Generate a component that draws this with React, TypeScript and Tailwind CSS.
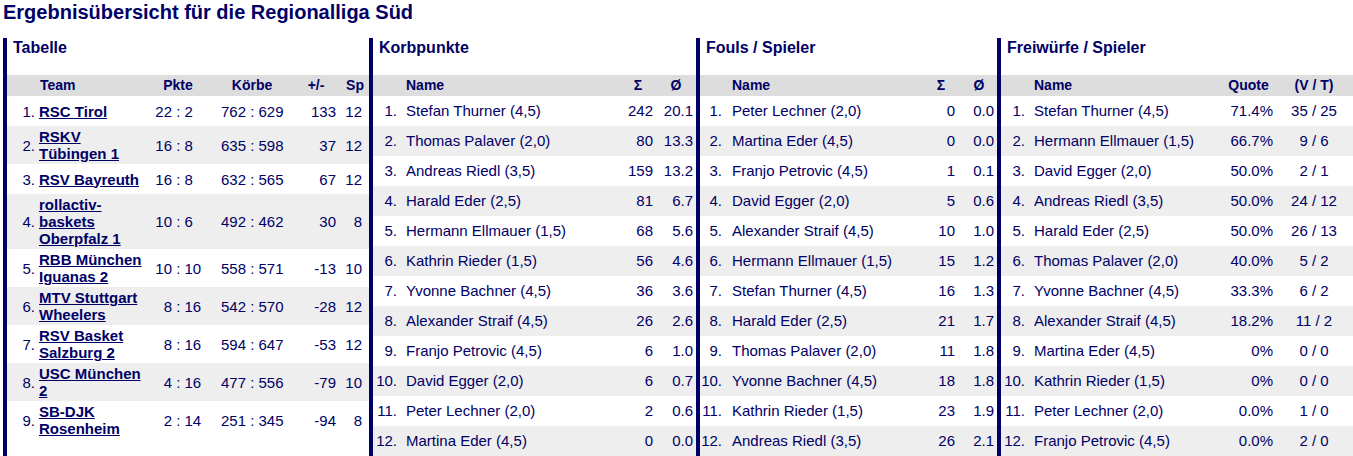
import React from 'react';

type TeamRow = [string, string, number, number, number, number, number, number];
type PlayerRow = [string, string, string];

const tabelle: TeamRow[] = [
  ['1.', 'RSC Tirol', 22, 2, 762, 629, 133, 12],
  ['2.', 'RSKV Tübingen 1', 16, 8, 635, 598, 37, 12],
  ['3.', 'RSV Bayreuth', 16, 8, 632, 565, 67, 12],
  ['4.', 'rollactiv-baskets Oberpfalz 1', 10, 6, 492, 462, 30, 8],
  ['5.', 'RBB München Iguanas 2', 10, 10, 558, 571, -13, 10],
  ['6.', 'MTV Stuttgart Wheelers', 8, 16, 542, 570, -28, 12],
  ['7.', 'RSV Basket Salzburg 2', 8, 16, 594, 647, -53, 12],
  ['8.', 'USC München 2', 4, 16, 477, 556, -79, 10],
  ['9.', 'SB-DJK Rosenheim', 2, 14, 251, 345, -94, 8],
];

const korbpunkte: PlayerRow[] = [
  ['Stefan Thurner (4,5)', '242', '20.1'],
  ['Thomas Palaver (2,0)', '80', '13.3'],
  ['Andreas Riedl (3,5)', '159', '13.2'],
  ['Harald Eder (2,5)', '81', '6.7'],
  ['Hermann Ellmauer (1,5)', '68', '5.6'],
  ['Kathrin Rieder (1,5)', '56', '4.6'],
  ['Yvonne Bachner (4,5)', '36', '3.6'],
  ['Alexander Straif (4,5)', '26', '2.6'],
  ['Franjo Petrovic (4,5)', '6', '1.0'],
  ['David Egger (2,0)', '6', '0.7'],
  ['Peter Lechner (2,0)', '2', '0.6'],
  ['Martina Eder (4,5)', '0', '0.0'],
];

const fouls: PlayerRow[] = [
  ['Peter Lechner (2,0)', '0', '0.0'],
  ['Martina Eder (4,5)', '0', '0.0'],
  ['Franjo Petrovic (4,5)', '1', '0.1'],
  ['David Egger (2,0)', '5', '0.6'],
  ['Alexander Straif (4,5)', '10', '1.0'],
  ['Hermann Ellmauer (1,5)', '15', '1.2'],
  ['Stefan Thurner (4,5)', '16', '1.3'],
  ['Harald Eder (2,5)', '21', '1.7'],
  ['Thomas Palaver (2,0)', '11', '1.8'],
  ['Yvonne Bachner (4,5)', '18', '1.8'],
  ['Kathrin Rieder (1,5)', '23', '1.9'],
  ['Andreas Riedl (3,5)', '26', '2.1'],
];

const freiwuerfe: PlayerRow[] = [
  ['Stefan Thurner (4,5)', '71.4%', '35 / 25'],
  ['Hermann Ellmauer (1,5)', '66.7%', '9 / 6'],
  ['David Egger (2,0)', '50.0%', '2 / 1'],
  ['Andreas Riedl (3,5)', '50.0%', '24 / 12'],
  ['Harald Eder (2,5)', '50.0%', '26 / 13'],
  ['Thomas Palaver (2,0)', '40.0%', '5 / 2'],
  ['Yvonne Bachner (4,5)', '33.3%', '6 / 2'],
  ['Alexander Straif (4,5)', '18.2%', '11 / 2'],
  ['Martina Eder (4,5)', '0%', '0 / 0'],
  ['Kathrin Rieder (1,5)', '0%', '0 / 0'],
  ['Peter Lechner (2,0)', '0.0%', '1 / 0'],
  ['Franjo Petrovic (4,5)', '0.0%', '2 / 0'],
];

const Panel = ({ title, className, children }: { title: string; className: string; children: React.ReactNode }) => (
  <div className={`flex flex-col border-l-4 border-[#000066] ${className}`}>
    <div className="h-[37px] pt-[1px] pl-[6px] text-[16px] font-bold leading-[18px]">{title}</div>
    {children}
  </div>
);

const rowBg = (i: number) => (i % 2 === 1 ? 'bg-[#eeeeee]' : 'bg-white');

// Spalten: Rang / Name / Wert / Wert
type Cols = {
  rank: string;
  name: string;
  a: string;
  aHead: string;
  b: string;
  bHead: string;
};

const PlayerTable = ({ rows, heads, cols }: { rows: PlayerRow[]; heads: [string, string]; cols: Cols }) => (
  <div>
    <div className="flex h-[21px] items-center bg-[#dddddd] text-[14px] font-bold">
      <div className={cols.rank} />
      <div className={cols.name}>Name</div>
      <div className={cols.aHead}>{heads[0]}</div>
      <div className={cols.bHead}>{heads[1]}</div>
    </div>
    {rows.map((r, i) => (
      <div key={i} className={`flex h-[30px] items-center ${rowBg(i)}`}>
        <div className={`${cols.rank} text-right`}>{i + 1}.</div>
        <div className={`${cols.name} whitespace-nowrap`}>{r[0]}</div>
        <div className={cols.a}>{r[1]}</div>
        <div className={cols.b}>{r[2]}</div>
      </div>
    ))}
  </div>
);

const Ratio = ({ l, r, lw, rw }: { l: number; r: number; lw: string; rw: string }) => (
  <div className="flex">
    <span className={`${lw} text-right`}>{l}</span>
    <span className="whitespace-pre"> : </span>
    <span className={rw}>{r}</span>
  </div>
);

const Tabelle = () => (
  <div>
    <div className="flex h-[21px] items-center bg-[#dddddd] text-[14px] font-bold">
      <div className="w-[28px] shrink-0" />
      <div className="w-[108px] shrink-0 pl-[5px]">Team</div>
      <div className="w-[70px] shrink-0 text-center">Pkte</div>
      <div className="w-[78px] shrink-0 text-center">Körbe</div>
      <div className="w-[50px] shrink-0 text-center">+/-</div>
      <div className="w-[28px] shrink-0 text-center">Sp</div>
    </div>
    {tabelle.map((t, i) => (
      <div key={i} className={`flex min-h-[30px] items-center py-[2px] leading-[17px] ${rowBg(i)}`}>
        <div className="w-[28px] shrink-0 text-right">{t[0]}</div>
        <div className="w-[108px] shrink-0 pl-[4px]">
          <a href="#" className="font-bold underline">
            {t[1]}
          </a>
        </div>
        <div className="w-[70px] shrink-0">
          <Ratio l={t[2]} r={t[3]} lw="w-[29px]" rw="w-[28px]" />
        </div>
        <div className="w-[78px] shrink-0">
          <Ratio l={t[4]} r={t[5]} lw="w-[33px]" rw="w-[32px]" />
        </div>
        <div className="w-[50px] shrink-0 pr-[5px] text-right">{t[6]}</div>
        <div className="w-[28px] shrink-0 pr-[7px] text-right">{t[7]}</div>
      </div>
    ))}
  </div>
);

const App = () => {
  return (
    <div className="min-h-[456px] bg-white pl-[3px] font-['Liberation_Sans',Arial,sans-serif] text-[15px] text-[#000066]">
      <h1 className="h-[38px] pt-[1px] text-[20px] font-bold leading-[23px]">
        Ergebnisübersicht für die Regionalliga Süd
      </h1>
      <div className="flex items-stretch">
        <Panel title="Tabelle" className="w-[366px] shrink-0">
          <Tabelle />
        </Panel>
        <Panel title="Korbpunkte" className="w-[327px] shrink-0">
          <PlayerTable
            rows={korbpunkte}
            heads={['Σ', 'Ø']}
            cols={{
              rank: 'w-[24px] shrink-0',
              name: 'flex-1 pl-[9px]',
              a: 'w-[36px] shrink-0 pr-[3px] text-right',
              aHead: 'w-[36px] shrink-0 text-center',
              b: 'w-[40px] shrink-0 pr-[3px] text-right',
              bHead: 'w-[40px] shrink-0 text-center',
            }}
          />
        </Panel>
        <Panel title="Fouls / Spieler" className="w-[301px] shrink-0">
          <PlayerTable
            rows={fouls}
            heads={['Σ', 'Ø']}
            cols={{
              rank: 'w-[22px] shrink-0',
              name: 'flex-1 pl-[10px]',
              a: 'w-[37px] shrink-0 pr-[6px] text-right',
              aHead: 'w-[37px] shrink-0 pr-[3px] text-center',
              b: 'w-[36px] shrink-0 pr-[3px] text-right',
              bHead: 'w-[36px] shrink-0 text-center',
            }}
          />
        </Panel>
        <Panel title="Freiwürfe / Spieler" className="flex-1">
          <PlayerTable
            rows={freiwuerfe}
            heads={['Quote', '(V / T)']}
            cols={{
              rank: 'w-[24px] shrink-0',
              name: 'flex-1 pl-[9px]',
              a: 'w-[53px] shrink-0 pr-[2px] text-right',
              aHead: 'w-[53px] shrink-0 text-center',
              b: 'w-[78px] shrink-0 text-center',
              bHead: 'w-[78px] shrink-0 text-center',
            }}
          />
        </Panel>
      </div>
    </div>
  );
};

export default App;
